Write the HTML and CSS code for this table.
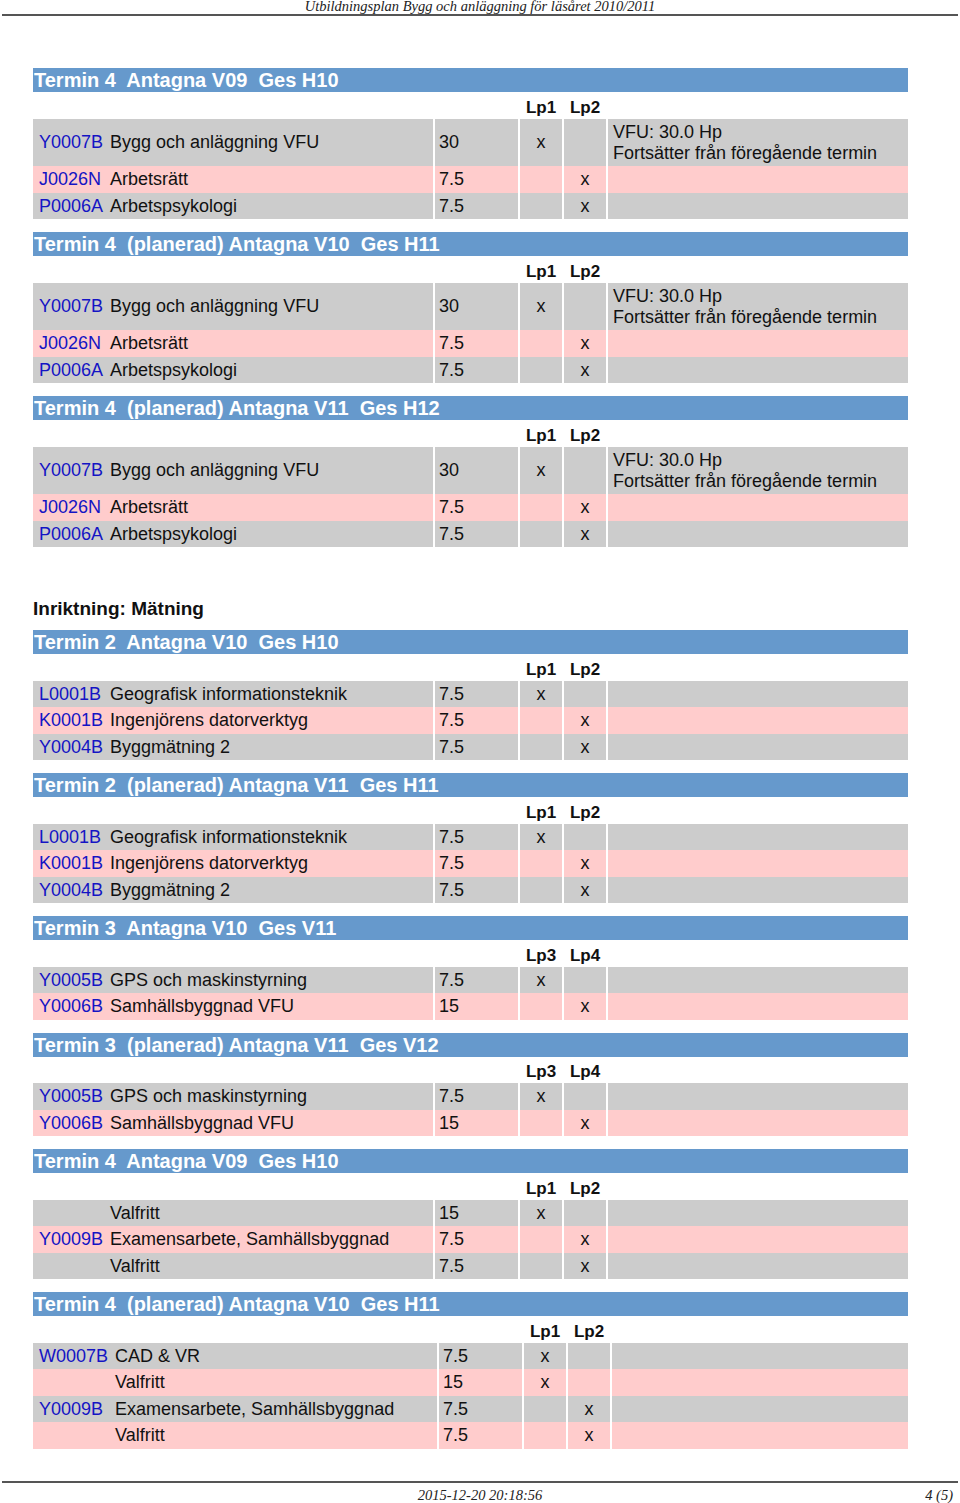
FILE: index.html
```html
<!DOCTYPE html>
<html lang="sv">
<head>
<meta charset="utf-8">
<title>Utbildningsplan Bygg och anläggning</title>
<link rel="stylesheet" href="styles.css">
</head>
<body>
<header class="page-head"><div class="page-title">Utbildningsplan Bygg och anläggning för läsåret 2010/2011</div></header>
<main class="content">

  <section class="term">
    <h2 class="term-bar">Termin 4  Antagna V09  Ges H10</h2>
    <div class="tbl">
      <div class="row row-head"><span class="c-code"></span><span class="c-name"></span><span class="c-hp"></span><span class="c-lp">Lp1</span><span class="c-lp">Lp2</span><span class="c-note"></span></div>
      <div class="row gray tall"><span class="c-code">Y0007B</span><span class="c-name">Bygg och anläggning VFU</span><span class="c-hp">30</span><span class="c-lp">x</span><span class="c-lp"></span><span class="c-note">VFU: 30.0 Hp<br>Fortsätter från föregående termin</span></div>
      <div class="row pink"><span class="c-code">J0026N</span><span class="c-name">Arbetsrätt</span><span class="c-hp">7.5</span><span class="c-lp"></span><span class="c-lp">x</span><span class="c-note"></span></div>
      <div class="row gray"><span class="c-code">P0006A</span><span class="c-name">Arbetspsykologi</span><span class="c-hp">7.5</span><span class="c-lp"></span><span class="c-lp">x</span><span class="c-note"></span></div>
    </div>
  </section>

  <section class="term">
    <h2 class="term-bar">Termin 4  (planerad) Antagna V10  Ges H11</h2>
    <div class="tbl">
      <div class="row row-head"><span class="c-code"></span><span class="c-name"></span><span class="c-hp"></span><span class="c-lp">Lp1</span><span class="c-lp">Lp2</span><span class="c-note"></span></div>
      <div class="row gray tall"><span class="c-code">Y0007B</span><span class="c-name">Bygg och anläggning VFU</span><span class="c-hp">30</span><span class="c-lp">x</span><span class="c-lp"></span><span class="c-note">VFU: 30.0 Hp<br>Fortsätter från föregående termin</span></div>
      <div class="row pink"><span class="c-code">J0026N</span><span class="c-name">Arbetsrätt</span><span class="c-hp">7.5</span><span class="c-lp"></span><span class="c-lp">x</span><span class="c-note"></span></div>
      <div class="row gray"><span class="c-code">P0006A</span><span class="c-name">Arbetspsykologi</span><span class="c-hp">7.5</span><span class="c-lp"></span><span class="c-lp">x</span><span class="c-note"></span></div>
    </div>
  </section>

  <section class="term">
    <h2 class="term-bar">Termin 4  (planerad) Antagna V11  Ges H12</h2>
    <div class="tbl">
      <div class="row row-head"><span class="c-code"></span><span class="c-name"></span><span class="c-hp"></span><span class="c-lp">Lp1</span><span class="c-lp">Lp2</span><span class="c-note"></span></div>
      <div class="row gray tall"><span class="c-code">Y0007B</span><span class="c-name">Bygg och anläggning VFU</span><span class="c-hp">30</span><span class="c-lp">x</span><span class="c-lp"></span><span class="c-note">VFU: 30.0 Hp<br>Fortsätter från föregående termin</span></div>
      <div class="row pink"><span class="c-code">J0026N</span><span class="c-name">Arbetsrätt</span><span class="c-hp">7.5</span><span class="c-lp"></span><span class="c-lp">x</span><span class="c-note"></span></div>
      <div class="row gray"><span class="c-code">P0006A</span><span class="c-name">Arbetspsykologi</span><span class="c-hp">7.5</span><span class="c-lp"></span><span class="c-lp">x</span><span class="c-note"></span></div>
    </div>
  </section>

  <h3 class="track">Inriktning: Mätning</h3>

  <section class="term">
    <h2 class="term-bar">Termin 2  Antagna V10  Ges H10</h2>
    <div class="tbl">
      <div class="row row-head"><span class="c-code"></span><span class="c-name"></span><span class="c-hp"></span><span class="c-lp">Lp1</span><span class="c-lp">Lp2</span><span class="c-note"></span></div>
      <div class="row gray"><span class="c-code">L0001B</span><span class="c-name">Geografisk informationsteknik</span><span class="c-hp">7.5</span><span class="c-lp">x</span><span class="c-lp"></span><span class="c-note"></span></div>
      <div class="row pink"><span class="c-code">K0001B</span><span class="c-name">Ingenjörens datorverktyg</span><span class="c-hp">7.5</span><span class="c-lp"></span><span class="c-lp">x</span><span class="c-note"></span></div>
      <div class="row gray"><span class="c-code">Y0004B</span><span class="c-name">Byggmätning 2</span><span class="c-hp">7.5</span><span class="c-lp"></span><span class="c-lp">x</span><span class="c-note"></span></div>
    </div>
  </section>

  <section class="term">
    <h2 class="term-bar">Termin 2  (planerad) Antagna V11  Ges H11</h2>
    <div class="tbl">
      <div class="row row-head"><span class="c-code"></span><span class="c-name"></span><span class="c-hp"></span><span class="c-lp">Lp1</span><span class="c-lp">Lp2</span><span class="c-note"></span></div>
      <div class="row gray"><span class="c-code">L0001B</span><span class="c-name">Geografisk informationsteknik</span><span class="c-hp">7.5</span><span class="c-lp">x</span><span class="c-lp"></span><span class="c-note"></span></div>
      <div class="row pink"><span class="c-code">K0001B</span><span class="c-name">Ingenjörens datorverktyg</span><span class="c-hp">7.5</span><span class="c-lp"></span><span class="c-lp">x</span><span class="c-note"></span></div>
      <div class="row gray"><span class="c-code">Y0004B</span><span class="c-name">Byggmätning 2</span><span class="c-hp">7.5</span><span class="c-lp"></span><span class="c-lp">x</span><span class="c-note"></span></div>
    </div>
  </section>

  <section class="term">
    <h2 class="term-bar">Termin 3  Antagna V10  Ges V11</h2>
    <div class="tbl">
      <div class="row row-head"><span class="c-code"></span><span class="c-name"></span><span class="c-hp"></span><span class="c-lp">Lp3</span><span class="c-lp">Lp4</span><span class="c-note"></span></div>
      <div class="row gray"><span class="c-code">Y0005B</span><span class="c-name">GPS och maskinstyrning</span><span class="c-hp">7.5</span><span class="c-lp">x</span><span class="c-lp"></span><span class="c-note"></span></div>
      <div class="row pink"><span class="c-code">Y0006B</span><span class="c-name">Samhällsbyggnad VFU</span><span class="c-hp">15</span><span class="c-lp"></span><span class="c-lp">x</span><span class="c-note"></span></div>
    </div>
  </section>

  <section class="term">
    <h2 class="term-bar">Termin 3  (planerad) Antagna V11  Ges V12</h2>
    <div class="tbl">
      <div class="row row-head"><span class="c-code"></span><span class="c-name"></span><span class="c-hp"></span><span class="c-lp">Lp3</span><span class="c-lp">Lp4</span><span class="c-note"></span></div>
      <div class="row gray"><span class="c-code">Y0005B</span><span class="c-name">GPS och maskinstyrning</span><span class="c-hp">7.5</span><span class="c-lp">x</span><span class="c-lp"></span><span class="c-note"></span></div>
      <div class="row pink"><span class="c-code">Y0006B</span><span class="c-name">Samhällsbyggnad VFU</span><span class="c-hp">15</span><span class="c-lp"></span><span class="c-lp">x</span><span class="c-note"></span></div>
    </div>
  </section>

  <section class="term">
    <h2 class="term-bar">Termin 4  Antagna V09  Ges H10</h2>
    <div class="tbl">
      <div class="row row-head"><span class="c-code"></span><span class="c-name"></span><span class="c-hp"></span><span class="c-lp">Lp1</span><span class="c-lp">Lp2</span><span class="c-note"></span></div>
      <div class="row gray"><span class="c-code"></span><span class="c-name">Valfritt</span><span class="c-hp">15</span><span class="c-lp">x</span><span class="c-lp"></span><span class="c-note"></span></div>
      <div class="row pink"><span class="c-code">Y0009B</span><span class="c-name">Examensarbete, Samhällsbyggnad</span><span class="c-hp">7.5</span><span class="c-lp"></span><span class="c-lp">x</span><span class="c-note"></span></div>
      <div class="row gray"><span class="c-code"></span><span class="c-name">Valfritt</span><span class="c-hp">7.5</span><span class="c-lp"></span><span class="c-lp">x</span><span class="c-note"></span></div>
    </div>
  </section>

  <section class="term">
    <h2 class="term-bar">Termin 4  (planerad) Antagna V10  Ges H11</h2>
    <div class="tbl tbl-wide">
      <div class="row row-head"><span class="c-code"></span><span class="c-name"></span><span class="c-hp"></span><span class="c-lp">Lp1</span><span class="c-lp">Lp2</span><span class="c-note"></span></div>
      <div class="row gray"><span class="c-code">W0007B</span><span class="c-name">CAD &amp; VR</span><span class="c-hp">7.5</span><span class="c-lp">x</span><span class="c-lp"></span><span class="c-note"></span></div>
      <div class="row pink"><span class="c-code"></span><span class="c-name">Valfritt</span><span class="c-hp">15</span><span class="c-lp">x</span><span class="c-lp"></span><span class="c-note"></span></div>
      <div class="row gray"><span class="c-code">Y0009B</span><span class="c-name">Examensarbete, Samhällsbyggnad</span><span class="c-hp">7.5</span><span class="c-lp"></span><span class="c-lp">x</span><span class="c-note"></span></div>
      <div class="row pink"><span class="c-code"></span><span class="c-name">Valfritt</span><span class="c-hp">7.5</span><span class="c-lp"></span><span class="c-lp">x</span><span class="c-note"></span></div>
    </div>
  </section>

</main>
<footer class="page-foot">
  <span class="foot-spacer"></span>
  <span class="foot-date">2015-12-20 20:18:56</span>
  <span class="foot-page">4 (5)</span>
</footer>
</body>
</html>
```

FILE: styles.css
```css
html, body {
  margin: 0;
  padding: 0;
  background: #fff;
}

body {
  height: 1503px;
  display: flex;
  flex-direction: column;
  font-family: "Liberation Sans", Arial, sans-serif;
  color: #111;
  overflow: hidden;
}

.page-head {
  margin: 0 2px;
  height: 14px;
  border-bottom: 2px solid #555;
}

.page-title {
  font-family: "Liberation Serif", "Times New Roman", serif;
  font-style: italic;
  font-size: 14.5px;
  line-height: 12px;
  text-align: center;
  color: #222;
}

.content {
  padding: 52px 0 0 33px;
  width: 875px;
}

.term {
  margin-bottom: 13px;
}

.term-bar {
  margin: 0;
  height: 24px;
  line-height: 24px;
  padding-left: 1px;
  background: #6699cc;
  color: #fff;
  font-size: 20px;
  font-weight: bold;
  white-space: pre;
}

.track {
  margin: 51px 0 10px;
  font-size: 19px;
  line-height: 22px;
  font-weight: bold;
  color: #111;
}

.row {
  display: grid;
  grid-template-columns: 73px 327px 85px 44px 44px 302px;
  align-items: center;
  height: 26.5px;
  font-size: 18px;
  line-height: 21px;
}

.tbl-wide .row {
  grid-template-columns: 78px 326px 85px 44px 44px 298px;
}

.row > span {
  height: 100%;
  box-sizing: border-box;
  padding-top: 1px;
  display: flex;
  align-items: center;
  white-space: nowrap;
}

.row.tall {
  height: 47.5px;
}

.row.gray { background: #cccccc; }
.row.pink { background: #ffcccc; }

.row-head {
  background: #fff;
  font-size: 17px;
  font-weight: bold;
  line-height: 20px;
}

.row-head > span {
  align-items: flex-end;
  padding-top: 0;
  padding-bottom: 1px;
}

.c-code {
  padding-left: 6px;
  color: #1414c4;
}

.c-name {
  padding-left: 4px;
}

.c-hp {
  border-left: 2px solid #fff;
  padding-left: 4px;
}

.c-lp {
  border-left: 2px solid #fff;
  justify-content: center;
}

.c-note {
  border-left: 2px solid #fff;
  padding-left: 5px;
  white-space: normal !important;
}

.page-foot {
  margin: auto 2px 0;
  height: 20px;
  border-top: 2px solid #555;
  display: grid;
  grid-template-columns: 1fr auto 1fr;
  font-family: "Liberation Serif", "Times New Roman", serif;
  font-style: italic;
  font-size: 14.5px;
  line-height: 25px;
  color: #222;
}

.foot-page {
  text-align: right;
  padding-right: 5px;
}
```
